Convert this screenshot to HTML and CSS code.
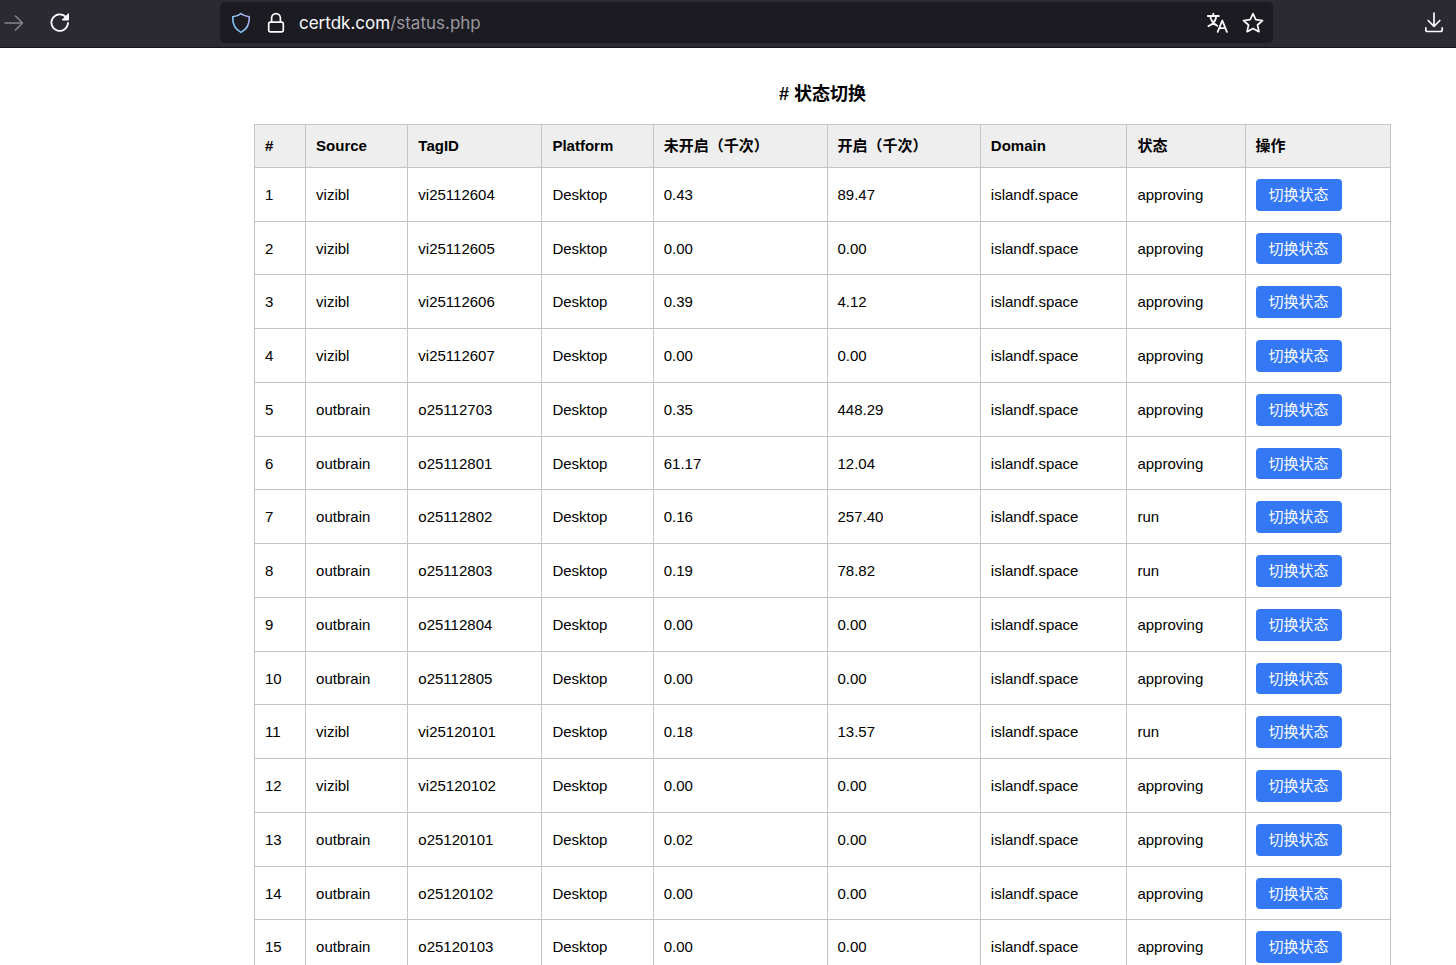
FILE: index.html
```
<!DOCTYPE html>
<html lang="zh-CN">
<head>
    <meta charset="UTF-8">
    <meta name="viewport" content="width=device-width, initial-scale=1.0">
    <title>状态切换</title>
    <link rel="stylesheet" href="styles.css">
</head>
<body>
    <!-- Browser toolbar -->
    <header class="toolbar">
        <nav class="nav-buttons">
            <button class="icon-button" aria-label="Forward" disabled>
                <svg width="24" height="24" viewBox="0 0 24 24" fill="none" stroke="#85848b" stroke-width="1.6" stroke-linecap="round" stroke-linejoin="round"><path d="M3 12h17.500M13.500 5l7 7-7 7"/></svg>
            </button>
            <button class="icon-button" aria-label="Reload">
                <svg width="24" height="24" viewBox="0 0 24 24" fill="none" stroke="#fbfbfe" stroke-width="1.8" stroke-linecap="round"><path d="M18 6.200A8.300 8.300 0 1 0 20 12"/><path d="M20.500 3v6h-6z" fill="#fbfbfe" stroke-width="1" stroke-linejoin="round"/></svg>
            </button>
        </nav>
        <div class="address-bar">
            <button class="icon-button" aria-label="Tracking protection">
                <svg width="24" height="24" viewBox="0 0 24 24" fill="none" stroke="url(#shield)" stroke-width="1.6" stroke-linejoin="round"><defs><linearGradient id="shield" x1="0" y1="1" x2="1" y2="0"><stop offset="0" stop-color="#6fc4f2"/><stop offset=".5" stop-color="#8ec8f5"/><stop offset="1" stop-color="#b9a5ee"/></linearGradient></defs><path d="M12 2.600c2.300 1.900 5 2.700 8.300 3.200.300 7-2.600 12.600-8.300 15.600C6.300 18.400 3.400 12.800 3.700 5.800 7 5.300 9.700 4.500 12 2.600z"/></svg>
            </button>
            <button class="icon-button lock" aria-label="Site information">
                <svg width="24" height="24" viewBox="0 0 24 24" fill="none" stroke="#fbfbfe" stroke-width="1.700"><rect x="4.700" y="11.200" width="14.600" height="9.700" rx="1.800"/><path d="M7.600 11.200V7a4.400 4.400 0 0 1 8.800 0v4.200"/></svg>
            </button>
            <div class="url"><span class="host">certdk.com</span>/status.php</div>
            <button class="icon-button" aria-label="Translate">
                <svg width="24" height="24" viewBox="0 0 24 24" fill="none" stroke="#fbfbfe" stroke-width="1.800" stroke-linecap="round" stroke-linejoin="round"><path d="M2.800 5h11M8.300 2.700V5M5.200 5c.700 4.500 3.400 7.800 7 9.800M11.400 5c-.700 4.600-3.700 8.600-8 10.200"/><path d="M12.700 20.800l4.600-11.300 4.600 11.300M14.400 17.200h5.900"/></svg>
            </button>
            <button class="icon-button star" aria-label="Bookmark">
                <svg width="24" height="24" viewBox="0 0 24 24" fill="none" stroke="#fbfbfe" stroke-width="1.700" stroke-linejoin="round"><path d="M12 2.600l2.800 6.100 6.700.800-5 4.500 1.400 6.700L12 17.400l-5.900 3.300L7.500 14l-5-4.500 6.700-.800z"/></svg>
            </button>
        </div>
        <button class="icon-button" aria-label="Downloads">
            <svg width="24" height="24" viewBox="0 0 24 24" fill="none" stroke="#fbfbfe" stroke-width="1.700" stroke-linecap="round" stroke-linejoin="round"><path d="M12 2.200v13M6.200 9.500l5.800 5.800 5.800-5.800M3.800 16.900v1.800a1.800 1.800 0 0 0 1.800 1.800h12.800a1.800 1.800 0 0 0 1.800-1.800v-1.800"/></svg>
        </button>
    </header>

    <main class="content">
        <h2># 状态切换</h2>
        <table class="status-table">
            <colgroup>
                <col class="col-num">
                <col class="col-source">
                <col class="col-tag">
                <col class="col-platform">
                <col class="col-off">
                <col class="col-on">
                <col class="col-domain">
                <col class="col-status">
                <col>
            </colgroup>
            <thead>
                <tr>
                    <th>#</th>
                    <th>Source</th>
                    <th>TagID</th>
                    <th>Platform</th>
                    <th>未开启（千次）</th>
                    <th>开启（千次）</th>
                    <th>Domain</th>
                    <th>状态</th>
                    <th>操作</th>
                </tr>
            </thead>
            <tbody>
                <tr><td>1</td><td>vizibl</td><td>vi25112604</td><td>Desktop</td><td>0.43</td><td>89.47</td><td>islandf.space</td><td>approving</td><td><button class="switch-button">切换状态</button></td></tr>
                <tr><td>2</td><td>vizibl</td><td>vi25112605</td><td>Desktop</td><td>0.00</td><td>0.00</td><td>islandf.space</td><td>approving</td><td><button class="switch-button">切换状态</button></td></tr>
                <tr><td>3</td><td>vizibl</td><td>vi25112606</td><td>Desktop</td><td>0.39</td><td>4.12</td><td>islandf.space</td><td>approving</td><td><button class="switch-button">切换状态</button></td></tr>
                <tr><td>4</td><td>vizibl</td><td>vi25112607</td><td>Desktop</td><td>0.00</td><td>0.00</td><td>islandf.space</td><td>approving</td><td><button class="switch-button">切换状态</button></td></tr>
                <tr><td>5</td><td>outbrain</td><td>o25112703</td><td>Desktop</td><td>0.35</td><td>448.29</td><td>islandf.space</td><td>approving</td><td><button class="switch-button">切换状态</button></td></tr>
                <tr><td>6</td><td>outbrain</td><td>o25112801</td><td>Desktop</td><td>61.17</td><td>12.04</td><td>islandf.space</td><td>approving</td><td><button class="switch-button">切换状态</button></td></tr>
                <tr><td>7</td><td>outbrain</td><td>o25112802</td><td>Desktop</td><td>0.16</td><td>257.40</td><td>islandf.space</td><td>run</td><td><button class="switch-button">切换状态</button></td></tr>
                <tr><td>8</td><td>outbrain</td><td>o25112803</td><td>Desktop</td><td>0.19</td><td>78.82</td><td>islandf.space</td><td>run</td><td><button class="switch-button">切换状态</button></td></tr>
                <tr><td>9</td><td>outbrain</td><td>o25112804</td><td>Desktop</td><td>0.00</td><td>0.00</td><td>islandf.space</td><td>approving</td><td><button class="switch-button">切换状态</button></td></tr>
                <tr><td>10</td><td>outbrain</td><td>o25112805</td><td>Desktop</td><td>0.00</td><td>0.00</td><td>islandf.space</td><td>approving</td><td><button class="switch-button">切换状态</button></td></tr>
                <tr><td>11</td><td>vizibl</td><td>vi25120101</td><td>Desktop</td><td>0.18</td><td>13.57</td><td>islandf.space</td><td>run</td><td><button class="switch-button">切换状态</button></td></tr>
                <tr><td>12</td><td>vizibl</td><td>vi25120102</td><td>Desktop</td><td>0.00</td><td>0.00</td><td>islandf.space</td><td>approving</td><td><button class="switch-button">切换状态</button></td></tr>
                <tr><td>13</td><td>outbrain</td><td>o25120101</td><td>Desktop</td><td>0.02</td><td>0.00</td><td>islandf.space</td><td>approving</td><td><button class="switch-button">切换状态</button></td></tr>
                <tr><td>14</td><td>outbrain</td><td>o25120102</td><td>Desktop</td><td>0.00</td><td>0.00</td><td>islandf.space</td><td>approving</td><td><button class="switch-button">切换状态</button></td></tr>
                <tr><td>15</td><td>outbrain</td><td>o25120103</td><td>Desktop</td><td>0.00</td><td>0.00</td><td>islandf.space</td><td>approving</td><td><button class="switch-button">切换状态</button></td></tr>
            </tbody>
        </table>
    </main>
</body>
</html>
```
FILE: styles.css
```
body {
    margin: 0;
    font-family: "Liberation Sans", Arial, "Noto Sans CJK SC", sans-serif;
    font-size: 15px;
    color: #000;
    background: #fff;
}

button {
    font-family: inherit;
    border: none;
    cursor: pointer;
}

/* Browser toolbar */
.toolbar {
    display: flex;
    align-items: center;
    justify-content: space-between;
    padding: 2px 10px 4px 2px;
    background: #2b2a33;
    border-bottom: 1px solid #15141a;
}

.nav-buttons {
    display: flex;
    gap: 22px;
    width: 218px;
}

.icon-button {
    display: flex;
    padding: 0;
    background: none;
}

.address-bar {
    display: flex;
    align-items: center;
    flex: 1;
    height: 41px;
    margin-right: 149px;
    padding: 0 8px 0 9px;
    border-radius: 5px;
    background: #1c1b22;
}

.lock {
    margin: 0 11px;
}

.star {
    margin-left: 12px;
}

.url {
    flex: 1;
    font-family: Inter, sans-serif;
    font-size: 17px;
    color: #9a999f;
}

.host {
    color: #fbfbfe;
}

/* Page content */
.content {
    margin: 33px 65px 0 254px;
}

h2 {
    margin: 0 0 17px;
    font-size: 18px;
    line-height: 26px;
    text-align: center;
}

/* Table styles */
.status-table {
    width: 100%;
    table-layout: fixed;
    border-collapse: collapse;
}

.col-num { width: 4.5%; }
.col-source { width: 9%; }
.col-tag { width: 11.8%; }
.col-platform { width: 9.8%; }
.col-off { width: 15.3%; }
.col-on { width: 13.5%; }
.col-domain { width: 12.9%; }
.col-status { width: 10.4%; }

th, td {
    padding: 11px 10px 10px;
    text-align: left;
    line-height: 1.45;
    border: 1px solid #c4c4c4;
}

th {
    padding-top: 10px;
    background: #eee;
}

.switch-button {
    display: block;
    padding: 5px 13px;
    font-size: 15px;
    line-height: 1.45;
    color: #fff;
    background: #3478f6;
    border-radius: 4px;
}
```
